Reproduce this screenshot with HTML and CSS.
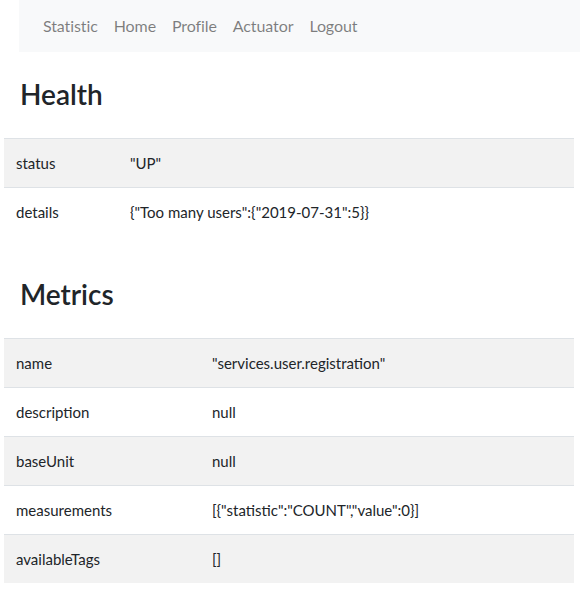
FILE: index.html
```html
<!DOCTYPE html>
<html>
<head>
<meta charset="utf-8">
<link rel="stylesheet" href="styles.css">
</head>
<body>
<nav class="navbar">
  <a class="nav-link" href="#">Statistic</a>
  <a class="nav-link" href="#">Home</a>
  <a class="nav-link" href="#">Profile</a>
  <a class="nav-link" href="#">Actuator</a>
  <a class="nav-link" href="#">Logout</a>
</nav>
<main class="content">
  <h2 class="title">Health</h2>
  <table class="table table-health">
    <tr><td class="key">status</td><td>"UP"</td></tr>
    <tr><td class="key">details</td><td>{"Too many users":{"2019-07-31":5}}</td></tr>
  </table>
  <h2 class="title title-metrics">Metrics</h2>
  <table class="table table-metrics">
    <tr><td class="key">name</td><td>"services.user.registration"</td></tr>
    <tr><td class="key">description</td><td>null</td></tr>
    <tr><td class="key">baseUnit</td><td>null</td></tr>
    <tr><td class="key">measurements</td><td>[{"statistic":"COUNT","value":0}]</td></tr>
    <tr><td class="key">availableTags</td><td>[]</td></tr>
  </table>
</main>
</body>
</html>
```
FILE: styles.css
```css
html, body {
  margin: 0;
  padding: 0;
  background: #fff;
}
body {
  font-family: "Lato", "Open Sans", sans-serif;
  font-size: 15px;
  color: #212529;
}
.navbar {
  display: flex;
  align-items: center;
  height: 52px;
  margin-left: 19px;
  padding-left: 16px;
  background: #f8f9fa;
}
.nav-link {
  padding: 0 8px 2px;
  color: rgba(0, 0, 0, 0.5);
  text-decoration: none;
  font-size: 16px;
  letter-spacing: -0.1px;
}
.content {
  padding: 0 6px 0 4px;
}
.title {
  margin: 25px 0 0 16px;
  font-size: 28px;
  line-height: 34px;
  font-weight: 600;
}
.title-metrics {
  margin-top: 41px;
}
.table {
  width: 100%;
  border-collapse: collapse;
  margin-top: 27px;
}
.table td {
  padding: 0 12px;
  height: 48px;
  border-top: 1px solid #dee2e6;
  vertical-align: middle;
}
.table tr:nth-child(odd) td {
  background: #f2f2f2;
}
.table-health .key { width: 90px; }
.table-metrics .key { width: 172px; }
```
